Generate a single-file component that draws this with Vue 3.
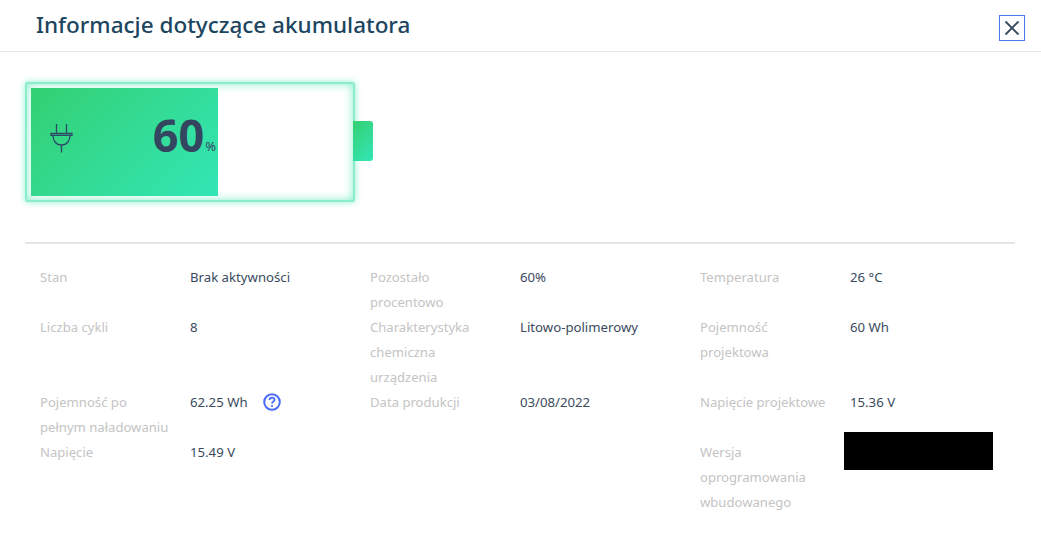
<script setup>
const rows = [
  [['Stan', 'Brak aktywności'], ['Pozostało procentowo', '60%'], ['Temperatura', '26 °C']],
  [['Liczba cykli', '8'], ['Charakterystyka chemiczna urządzenia', 'Litowo-polimerowy'], ['Pojemność projektowa', '60 Wh']],
  [['Pojemność po pełnym naładowaniu', '62.25 Wh', 'help'], ['Data produkcji', '03/08/2022'], ['Napięcie projektowe', '15.36 V']],
  [['Napięcie', '15.49 V'], null, ['Wersja oprogramowania wbudowanego', '', 'redacted']],
]
const cells = rows.flat()
</script>

<template>
  <div class="page">
    <header class="head">
      <h1>Informacje dotyczące akumulatora</h1>
      <button class="close" aria-label="Zamknij">
        <svg width="16" height="16" viewBox="0 0 16 16"><path d="M1.500 1.500l13 13M14.500 1.500l-13 13" stroke="#3a4a5e" stroke-width="1.800" fill="none"/></svg>
      </button>
    </header>
    <section class="batt-wrap">
      <div class="battery">
        <div class="fill">
          <svg class="plug" width="23" height="29" viewBox="0 0 23 29" fill="none" stroke="#2c4a66" stroke-width="1.300">
            <path d="M6.500 0v9.500M16.500 0v9.500M1 9.500h21v1.800h-21zM3 11.300c0 5.500 3 9.700 8.500 9.700s8.500-4.200 8.500-9.700M11.500 21v7.500"/>
          </svg>
          <span class="num">60</span><span class="pct">%</span>
        </div>
      </div>
      <div class="nub"></div>
    </section>
    <div class="grid">
      <template v-for="(c, i) in cells" :key="i">
        <div class="cell">
          <template v-if="c">
            <div class="lab">{{ c[0] }}</div>
            <div class="val">
              {{ c[1] }}
              <svg v-if="c[2] === 'help'" class="help" width="20" height="20" viewBox="0 0 20 20" fill="none">
                <circle cx="10" cy="10" r="7.800" stroke="#4a6cf7" stroke-width="2"/>
                <path d="M7.500 8c0-1.500 1.100-2.400 2.600-2.400 1.500 0 2.500.9 2.500 2.100 0 1.900-2.600 1.800-2.600 3.800" stroke="#4a6cf7" stroke-width="1.800"/>
                <circle cx="10" cy="14" r="1.100" fill="#4a6cf7"/>
              </svg>
              <div v-if="c[2] === 'redacted'" class="black"></div>
            </div>
          </template>
        </div>
      </template>
    </div>
  </div>
</template>

<style>
html, body { background: #fff; }
</style>
<style scoped>
.page { width: 1041px; height: 549px; overflow: hidden; background: #fff; font-family: "Noto Sans", "Open Sans", sans-serif; }
.head { height: 51px; border-bottom: 1px solid #e5e5e5; display: flex; align-items: center; justify-content: space-between; padding: 0 16px 0 36px; }
h1 { margin: 0 0 2px; font-size: 22.5px; font-weight: 500; color: #1c4560; line-height: 48px; }
.close { width: 26px; height: 26px; margin-top: 5px; padding: 0; background: #fff; border: 1px solid #4b7bec; display: flex; align-items: center; justify-content: center; }
.batt-wrap { display: flex; align-items: center; margin: 30px 0 0 25px; height: 120px; }
.battery { width: 330px; height: 120px; box-sizing: border-box; border: 2px solid #8cedce; border-radius: 2px; padding: 4px 135px 4px 4px; box-shadow: 0 0 7px #8ff0d0, inset 0 0 10px #85eecb; }
.fill { height: 100%; position: relative; display: flex; align-items: center; justify-content: flex-end; padding-right: 2px; background: linear-gradient(135deg, #33d072, #33e6b6); color: #34465f; }
.plug { position: absolute; left: 19px; top: 36px; }
.num { font-size: 45px; font-weight: 700; line-height: 1; margin-top: -16px; }
.pct { font-size: 13px; align-self: flex-end; margin-bottom: 41px; margin-left: 1px; }
.nub { width: 20px; height: 40px; margin: -3px 0 0 -2px; border-radius: 0 3px 3px 0; background: linear-gradient(135deg, #33d072, #33e6b6); }
.grid { margin: 40px 26px 0 25px; padding-top: 21px; border-top: 2px solid #e5e5e5; display: grid; grid-template-columns: repeat(3, 330px); }
.cell { display: grid; grid-template-columns: 150px 1fr; padding-left: 15px; font-size: 13.2px; line-height: 25px; }
.lab { color: #c4c4c4; width: 135px; font-size: 13.1px; }
.val { color: #3a4a5e; position: relative; }
.help { position: absolute; left: 72px; top: 2px; }
.black { position: absolute; left: -6px; top: -8px; width: 149px; height: 38px; background: #000; }
</style>
